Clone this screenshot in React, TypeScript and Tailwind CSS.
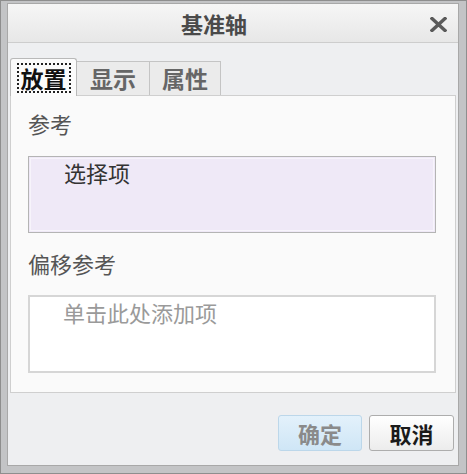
const cjk = { fontFamily: '"Noto Sans CJK SC", "Noto Sans", sans-serif' };

export default function App() {
	return (
		<div
			className="flex h-[474px] w-[467px] flex-col border border-[#8e8e8e] bg-[#c3c4c6] pt-[2px] pl-[6px] pr-[7px] pb-[7px]"
			style={cjk}
		>
			<div className="flex flex-1 flex-col border border-[#a8a8a8] bg-[#eeeff1]">
				{/* title bar */}
				<div className="relative flex h-[39px] shrink-0 items-center justify-center border-b border-[#cdcdcd] bg-gradient-to-b from-[#f6f6f6] to-[#e7e7e7]">
					<span className="mr-[38px] text-[22px] font-bold leading-none text-[#4a4a4a]">基准轴</span>
					<svg className="absolute right-[11px] top-[13px]" width="17" height="15" viewBox="0 0 17 15">
						<path d="M2 1.5 L15 13.5 M15 1.5 L2 13.5" stroke="#5a5a5a" strokeWidth="3.4" strokeLinecap="square" />
					</svg>
				</div>

				{/* tabs */}
				<div className="mt-[14px] flex h-[38px] shrink-0 items-end pl-[2px]">
					<div className="relative z-10 -mb-px flex h-[38px] w-[67px] items-center justify-center rounded-t-[3px] border border-b-0 border-[#b9b9b9] bg-[#fbfbfb]">
						<span className="border-2 border-dotted border-[#222] px-[2px] text-[23px] font-bold leading-[26px] text-[#111]">
							放置
						</span>
					</div>
					<div className="flex h-[34px] w-[73px] items-center justify-center border border-b-0 border-l-0 border-[#c4c4c4] bg-[#ebebeb] text-[23px] font-bold text-[#666]">
						显示
					</div>
					<div className="flex h-[34px] w-[71px] items-center justify-center border border-b-0 border-l-0 border-[#c4c4c4] bg-[#ebebeb] text-[23px] font-bold text-[#666]">
						属性
					</div>
				</div>

				{/* panel */}
				<div className="mx-[2px] flex h-[298px] shrink-0 flex-col border border-[#cfcfcf] bg-[#fafafa] pl-[17px] pr-[19px]">
					<div className="mt-[15px] h-[24px] text-[22px] leading-[24px] text-[#555]">参考</div>
					<div className="mt-[21px] h-[77px] border border-[#b4b4b4] bg-[#efe9f7] p-px">
						<div className="h-full border border-[#f7f4fb] pl-[33px] pt-[1px] text-[22px] leading-[24px] text-[#333]">
							选择项
						</div>
					</div>
					<div className="mt-[18px] h-[24px] text-[22px] leading-[24px] text-[#555]">偏移参考</div>
					<div className="mt-[20px] h-[78px] border-2 border-[#d6d6d6] bg-white pl-[33px] pt-[3px] text-[22px] leading-[24px] text-[#9a9a9a]">
						单击此处添加项
					</div>
				</div>

				{/* footer */}
				<div className="flex flex-1 items-start justify-end gap-[7px] pr-[4px] pt-[22px]">
					<button className="h-[36px] w-[84px] rounded-[3px] border border-[#bcd7ea] bg-gradient-to-b from-[#e3f1fb] to-[#cfe6f6] text-[22px] font-bold text-[#8a8a8a]">
						确定
					</button>
					<button className="h-[36px] w-[85px] rounded-[3px] border border-[#adadad] bg-gradient-to-b from-[#ffffff] to-[#ececec] text-[22px] font-bold text-[#1a1a1a]">
						取消
					</button>
				</div>
			</div>
		</div>
	);
}
